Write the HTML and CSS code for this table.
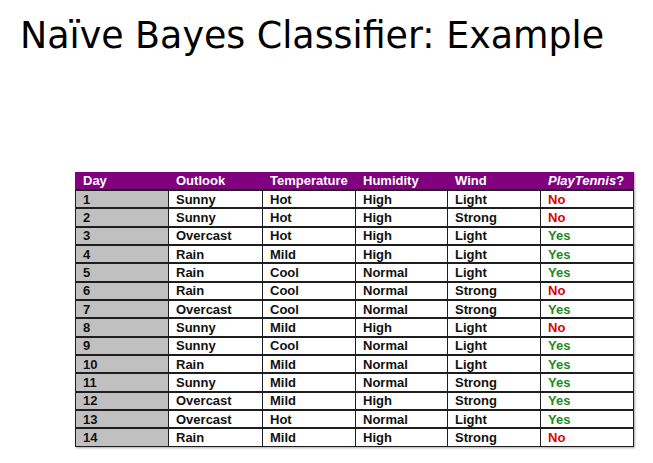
FILE: index.html
```html
<!DOCTYPE html>
<html>
<head>
<meta charset="utf-8">
<link rel="stylesheet" href="styles.css">
</head>
<body>
<h1 class="title">Naïve Bayes Classifier: Example</h1>
<table class="data">
  <colgroup>
    <col class="c1"><col class="c2"><col class="c3"><col class="c4"><col class="c5"><col class="c6">
  </colgroup>
  <thead>
    <tr><th>Day</th><th>Outlook</th><th>Temperature</th><th>Humidity</th><th>Wind</th><th><i>PlayTennis</i>?</th></tr>
  </thead>
  <tbody>
    <tr><td class="day">1</td><td>Sunny</td><td>Hot</td><td>High</td><td>Light</td><td class="no">No</td></tr>
    <tr><td class="day">2</td><td>Sunny</td><td>Hot</td><td>High</td><td>Strong</td><td class="no">No</td></tr>
    <tr><td class="day">3</td><td>Overcast</td><td>Hot</td><td>High</td><td>Light</td><td class="yes">Yes</td></tr>
    <tr><td class="day">4</td><td>Rain</td><td>Mild</td><td>High</td><td>Light</td><td class="yes">Yes</td></tr>
    <tr><td class="day">5</td><td>Rain</td><td>Cool</td><td>Normal</td><td>Light</td><td class="yes">Yes</td></tr>
    <tr><td class="day">6</td><td>Rain</td><td>Cool</td><td>Normal</td><td>Strong</td><td class="no">No</td></tr>
    <tr><td class="day">7</td><td>Overcast</td><td>Cool</td><td>Normal</td><td>Strong</td><td class="yes">Yes</td></tr>
    <tr><td class="day">8</td><td>Sunny</td><td>Mild</td><td>High</td><td>Light</td><td class="no">No</td></tr>
    <tr><td class="day">9</td><td>Sunny</td><td>Cool</td><td>Normal</td><td>Light</td><td class="yes">Yes</td></tr>
    <tr><td class="day">10</td><td>Rain</td><td>Mild</td><td>Normal</td><td>Light</td><td class="yes">Yes</td></tr>
    <tr><td class="day">11</td><td>Sunny</td><td>Mild</td><td>Normal</td><td>Strong</td><td class="yes">Yes</td></tr>
    <tr><td class="day">12</td><td>Overcast</td><td>Mild</td><td>High</td><td>Strong</td><td class="yes">Yes</td></tr>
    <tr><td class="day">13</td><td>Overcast</td><td>Hot</td><td>Normal</td><td>Light</td><td class="yes">Yes</td></tr>
    <tr><td class="day">14</td><td>Rain</td><td>Mild</td><td>High</td><td>Strong</td><td class="no">No</td></tr>
  </tbody>
</table>
</body>
</html>
```
FILE: styles.css
```css
html, body {
  margin: 0;
  padding: 0;
  background: #ffffff;
}
body {
  width: 653px;
  height: 463px;
  overflow: hidden;
}
.title {
  margin: 0;
  padding: 15px 0 0 20px;
  font-family: "DejaVu Sans", sans-serif;
  font-weight: normal;
  font-size: 36.4px;
  line-height: 42px;
  color: #000;
}
.data {
  margin: 115px 0 0 75px;
  border-collapse: collapse;
  table-layout: fixed;
  width: 558px;
  font-family: "Liberation Sans", Arial, sans-serif;
  font-weight: bold;
  font-size: 13px;
  color: #111;
  box-shadow: 1px 1px 2px rgba(0,0,0,0.35);
}
.c1 { width: 93px; }
.c2 { width: 94px; }
.c3 { width: 93px; }
.c4 { width: 92px; }
.c5 { width: 93px; }
.c6 { width: 93px; }
.data th, .data td {
  padding: 0 0 0 7px;
  text-align: left;
  vertical-align: middle;
  line-height: 15px;
  white-space: nowrap;
  overflow: hidden;
}
.data thead tr { height: 18px; }
.data th {
  background: #800080;
  color: #ffffff;
  font-weight: bold;
  border-left: 1px solid #800080;
  border-right: 1px solid #800080;
}
.data tbody tr { height: 18.35px; }
.data td {
  border: 1px solid #1e1e1e;
  border-top: 2px solid #1e1e1e;
  background: #ffffff;
}
.data td.day {
  background: #c0c0c0;
}
.data td.no { color: #e00000; }
.data td.yes { color: #1d8a1d; }
```
